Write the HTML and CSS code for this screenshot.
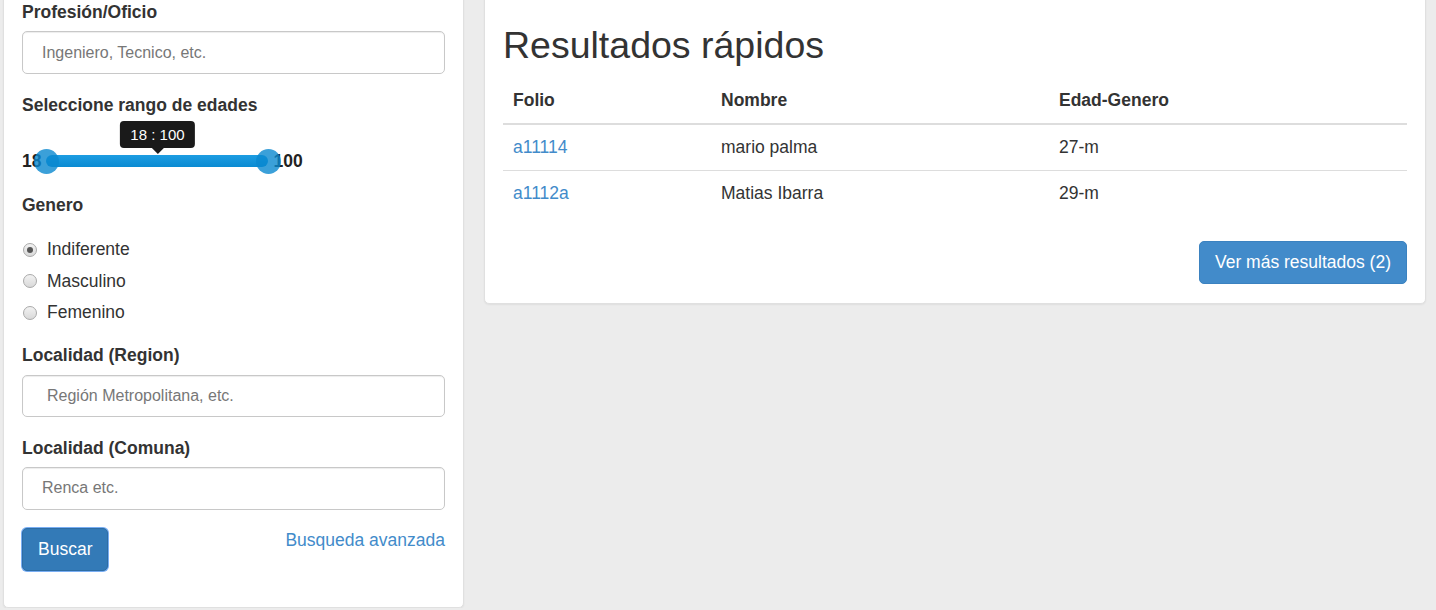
FILE: index.html
```html
<!DOCTYPE html>
<html lang="es">
<head>
<meta charset="utf-8">
<title>Búsqueda</title>
<link rel="stylesheet" href="styles.css">
</head>
<body>
<div class="page">
  <aside class="card search">
    <div class="group">
      <label class="lbl">Profesión/Oficio</label>
      <input class="field" type="text" placeholder="Ingeniero, Tecnico, etc.">
    </div>
    <div class="group">
      <label class="lbl">Seleccione rango de edades</label>
      <div class="range">
        <b class="range-val">18</b>
        <div class="slider">
          <div class="track"></div>
          <span class="handle handle-low"></span>
          <span class="handle handle-high"></span>
          <div class="tip">18 : 100</div>
        </div>
        <b class="range-val">100</b>
      </div>
    </div>
    <div class="group group-radios">
      <label class="lbl lbl-genero">Genero</label>
      <label class="radio"><span class="dot checked"></span>Indiferente</label>
      <label class="radio"><span class="dot"></span>Masculino</label>
      <label class="radio"><span class="dot"></span>Femenino</label>
    </div>
    <div class="group">
      <label class="lbl">Localidad (Region)</label>
      <input class="field field-indent" type="text" placeholder="Región Metropolitana, etc.">
    </div>
    <div class="group">
      <label class="lbl">Localidad (Comuna)</label>
      <input class="field" type="text" placeholder="Renca etc.">
    </div>
    <div class="actions">
      <button class="btn btn-dark" type="button">Buscar</button>
      <a class="link" href="#">Busqueda avanzada</a>
    </div>
  </aside>

  <main class="card results">
    <h2 class="title">Resultados rápidos</h2>
    <table class="table">
      <thead>
        <tr><th class="c1">Folio</th><th class="c2">Nombre</th><th class="c3">Edad-Genero</th></tr>
      </thead>
      <tbody>
        <tr><td><a class="link" href="#">a11114</a></td><td>mario palma</td><td>27-m</td></tr>
        <tr><td><a class="link" href="#">a1112a</a></td><td>Matias Ibarra</td><td>29-m</td></tr>
      </tbody>
    </table>
    <div class="more">
      <button class="btn btn-light" type="button">Ver más resultados (2)</button>
    </div>
  </main>
</div>
</body>
</html>
```

FILE: styles.css
```css
* { box-sizing: border-box; }

html, body {
  margin: 0;
  padding: 0;
  background: #ececec;
}

body {
  font-family: "Liberation Sans", Arial, Helvetica, sans-serif;
  font-size: 17.5px;
  line-height: 25px;
  color: #333;
  overflow: hidden;
}

.page {
  display: flex;
  align-items: flex-start;
  gap: 20px;
  padding-left: 3px;
  margin-top: -19px;
}

.card {
  background: #fff;
  border: 1px solid #e0e0e0;
  border-radius: 5px;
  box-shadow: 0 1px 2px rgba(0, 0, 0, 0.06);
  padding: 18px;
}

.search {
  width: 461px;
  flex: none;
}

.results {
  width: 942px;
  flex: none;
  padding-bottom: 19px;
}

/* form */
.group { margin-bottom: 18.75px; }

.lbl {
  display: block;
  font-weight: bold;
  line-height: 25px;
  margin-bottom: 6.25px;
}

.field {
  display: block;
  width: 100%;
  height: 42.5px;
  border: 1px solid #c8c8c8;
  border-radius: 5px;
  box-shadow: inset 0 1px 1px rgba(0, 0, 0, 0.075);
  padding: 0 19px;
  font-family: "Liberation Sans", Arial, sans-serif;
  font-size: 16px;
  color: #555;
  background: #fff;
}

.field::placeholder { color: #777; opacity: 1; }
.field-indent { padding-left: 24px; }

/* range slider */
.range {
  display: flex;
  align-items: center;
  gap: 5px;
  height: 25px;
  margin-top: 31px;
}

.range-val {
  font-weight: bold;
  color: #222;
  position: relative;
  z-index: 0;
}

.slider {
  position: relative;
  width: 222px;
  height: 12.5px;
  z-index: 1;
}

.track {
  height: 12.5px;
  border-radius: 6px;
  background: linear-gradient(#1d9de2, #0a8bd2);
}

.handle {
  position: absolute;
  top: 50%;
  width: 25px;
  height: 25px;
  margin-top: -12.5px;
  margin-left: -12.5px;
  border-radius: 50%;
  background: #0a88d0;
  opacity: 0.8;
}

.handle-low { left: 0; }
.handle-high { left: 100%; }

.tip {
  position: absolute;
  bottom: 100%;
  left: 50%;
  transform: translateX(-50%);
  margin-bottom: 7px;
  background: #1a1a1a;
  color: #fff;
  font-size: 15px;
  line-height: 19.5px;
  padding: 3.75px 10px;
  border-radius: 4px;
  white-space: nowrap;
}

.tip::after {
  content: "";
  position: absolute;
  top: 100%;
  left: 50%;
  margin-left: -6px;
  border-left: 6px solid transparent;
  border-right: 6px solid transparent;
  border-top: 6px solid #1a1a1a;
}

/* radios */
.group-radios { margin-top: 19.75px; margin-bottom: 18px; }
.lbl-genero { margin-bottom: 19px; }

.radio {
  display: flex;
  align-items: center;
  height: 25px;
  margin-bottom: 6.5px;
  color: #333;
}

.radio:last-child { margin-bottom: 0; }

.dot {
  width: 14px;
  height: 14px;
  margin-left: 1px;
  margin-right: 10px;
  border-radius: 50%;
  border: 1px solid #a9a9a9;
  background: linear-gradient(#f2f2f2, #d9d9d9);
  position: relative;
  flex: none;
}

.dot.checked::after {
  content: "";
  position: absolute;
  left: 3px;
  top: 3px;
  width: 6px;
  height: 6px;
  border-radius: 50%;
  background: #555;
}

/* actions */
.actions {
  display: flex;
  justify-content: space-between;
  align-items: flex-start;
  margin-bottom: 18px;
}

.btn {
  font-family: "Liberation Sans", Arial, sans-serif;
  font-size: 17.5px;
  line-height: 25px;
  height: 42.5px;
  padding: 7.5px 15px;
  border-radius: 5px;
  color: #fff;
  cursor: pointer;
}

.btn-dark {
  background: #337ab7;
  border: 1px solid #2e6da4;
  box-shadow: 0 0 0 1px #79aef3;
}

.btn-light {
  background: #428bca;
  border: 1px solid #3b82c0;
}

.link {
  color: #428bca;
  text-decoration: none;
}

/* results */
.title {
  font-size: 37.5px;
  font-weight: 500;
  line-height: 41.25px;
  margin: 25px 0 12px;
  color: #333;
}

.table {
  width: 100%;
  border-collapse: collapse;
  margin-bottom: 25px;
  table-layout: fixed;
}

.table th,
.table td {
  text-align: left;
  padding: 10px;
  line-height: 25px;
  vertical-align: top;
}

.table th {
  font-weight: bold;
  border-bottom: 2px solid #ddd;
}

.table td { border-top: 1px solid #ddd; }
.table tbody tr:first-child td { border-top: 0; }

.c1 { width: 208px; }
.c2 { width: 338px; }

.more {
  display: flex;
  justify-content: flex-end;
}
```
